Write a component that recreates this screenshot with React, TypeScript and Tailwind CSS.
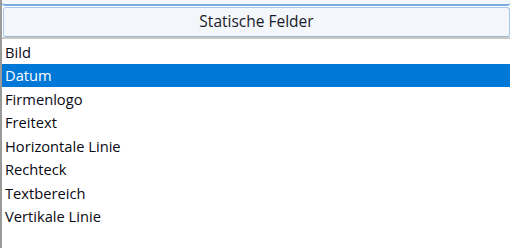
import React from "react";

const items = [
  "Bild",
  "Datum",
  "Firmenlogo",
  "Freitext",
  "Horizontale Linie",
  "Rechteck",
  "Textbereich",
  "Vertikale Linie",
];

export default function App() {
  const selected = 1;
  return (
    <div
      className="w-[510px] h-[248px] bg-white overflow-hidden flex flex-col border-l-2 border-[#9a9a9a]"
      style={{ fontFamily: '"Open Sans", "Noto Sans", sans-serif' }}
    >
      {/* previous group button, only its bottom edge is visible */}
      <div className="h-[6px] shrink-0 bg-[#f4f7fc] border-b-2 border-[#7aaee0] rounded-b-[3px]" />
      <button className="mt-[1px] h-[30px] shrink-0 ml-[1px] rounded-[3px] border border-[#a9c9ec] border-b-[#9fb6cf] bg-[#f3f6fb] text-[15.5px] text-[#1a1a2a] flex items-center justify-center">
        Statische Felder
      </button>
      <div className="h-[2px] shrink-0 bg-[#c9c9c9]" />
      <ul className="pt-[1px] text-[14.7px] text-[#0a0a14]">
        {items.map((item, i) => (
          <li
            key={item}
            className={
              "h-[23.5px] flex items-center pl-[3px] " +
              (i === selected ? "bg-[#0078d7] text-white" : "")
            }
          >
            {item}
          </li>
        ))}
      </ul>
    </div>
  );
}
